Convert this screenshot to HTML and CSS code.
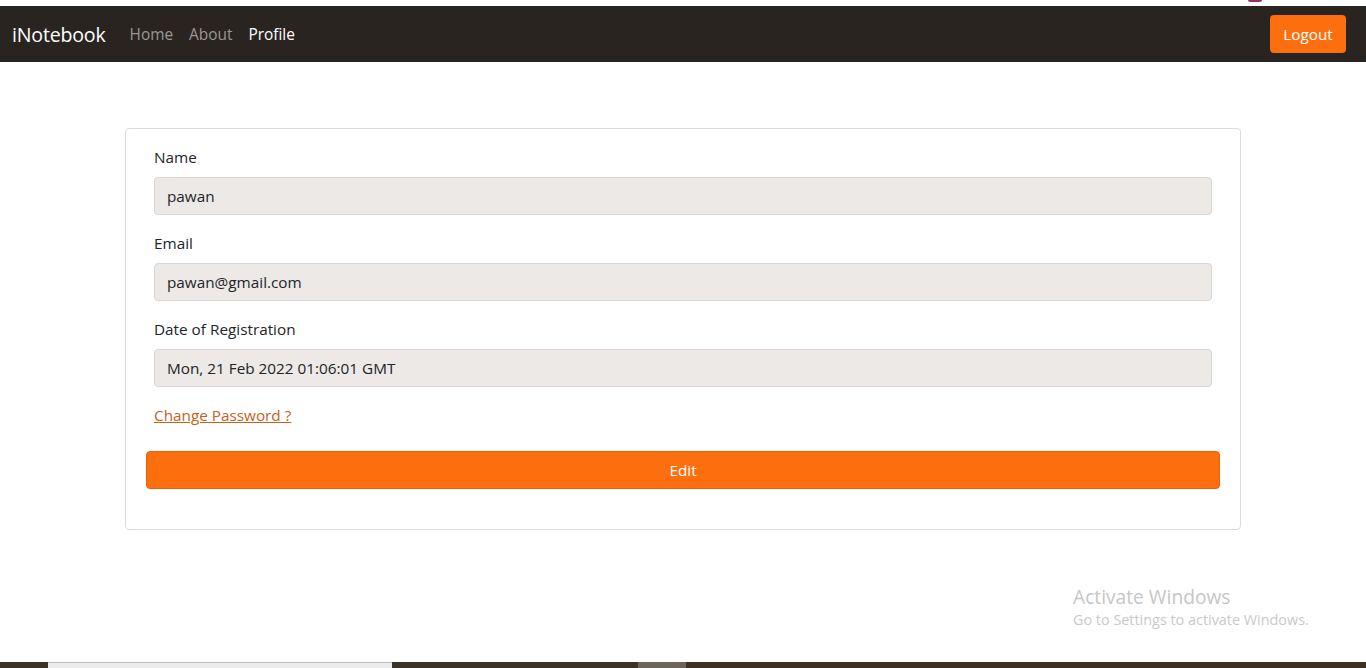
FILE: index.html
```html
<!DOCTYPE html>
<html lang="en">
<head>
<meta charset="utf-8">
<title>iNotebook</title>
<link rel="stylesheet" href="styles.css">
</head>
<body>
<div class="topstrip"><span class="pinkmark"></span></div>
<nav class="navbar">
  <div class="nav-left">
    <a class="brand" href="#">iNotebook</a>
    <a class="nav-link" href="#">Home</a>
    <a class="nav-link" href="#">About</a>
    <a class="nav-link active" href="#">Profile</a>
  </div>
  <button class="btn-logout">Logout</button>
</nav>
<main class="main">
  <div class="card">
    <div class="field">
      <label class="label">Name</label>
      <div class="input">pawan</div>
    </div>
    <div class="field">
      <label class="label">Email</label>
      <div class="input">pawan@gmail.com</div>
    </div>
    <div class="field">
      <label class="label">Date of Registration</label>
      <div class="input">Mon, 21 Feb 2022 01:06:01 GMT</div>
    </div>
    <a class="link" href="#">Change Password ?</a>
    <button class="btn-edit">Edit</button>
  </div>
</main>
<div class="watermark">
  <div class="wm-title">Activate Windows</div>
  <div class="wm-sub">Go to Settings to activate Windows.</div>
</div>
<div class="taskbar">
  <span class="tb tb-dark1"></span>
  <span class="tb tb-light"></span>
  <span class="tb tb-dark2"></span>
  <span class="tb tb-gray"></span>
  <span class="tb tb-dark3"></span>
</div>
</body>
</html>
```
FILE: styles.css
```css
* { box-sizing: border-box; }
html, body { margin: 0; padding: 0; }
body {
  font-family: "Open Sans", "Noto Sans", sans-serif;
  font-size: 15.3px;
  color: #212529;
  background: #fff;
  height: 668px;
  overflow: hidden;
  position: relative;
}
.topstrip {
  height: 6px;
  background: #fff;
  position: relative;
}
.pinkmark {
  position: absolute;
  left: 1248px;
  top: 0;
  width: 14px;
  height: 2px;
  background: #a0305a;
  border-radius: 0 0 6px 6px;
}
.navbar {
  height: 56px;
  background: #2a2421;
  display: flex;
  align-items: center;
  justify-content: space-between;
  padding: 0 20px 0 12px;
}
.nav-left { display: flex; align-items: center; }
.brand {
  color: #fff;
  text-decoration: none;
  font-size: 19.6px;
  margin-right: 16px;
  letter-spacing: -0.2px;
}
.nav-link {
  color: #9b9794;
  text-decoration: none;
  font-size: 15.4px;
  padding: 0 8px;
}
.nav-link.active { color: #fff; }
.btn-logout {
  font-family: inherit;
  background: #fd6e0e;
  color: #fff;
  border: none;
  border-radius: 4px;
  font-size: 15.3px;
  width: 76px;
  height: 38px;
  padding: 0;
}
.main {
  padding: 66px 125px 0 125px;
}
.card {
  border: 1px solid #dcdcdc;
  border-radius: 4px;
  height: 402px;
  padding: 17px 28px 0 28px;
}
.field { margin-bottom: 17px; }
.label {
  display: block;
  font-size: 15.3px;
  line-height: 22px;
  margin-bottom: 9px;
}
.input {
  height: 38px;
  background: #ece9e6;
  border: 1px solid #d8d5d2;
  border-radius: 4px;
  padding: 0 12px;
  display: flex;
  align-items: center;
  font-size: 15.3px;
}
.link {
  display: block;
  color: #c4621a;
  font-size: 15.3px;
  line-height: 22px;
  margin-top: 1px;
  width: max-content;
}
.btn-edit {
  display: block;
  font-family: inherit;
  margin: 25px -8px 0 -8px;
  width: calc(100% + 16px);
  height: 38px;
  background: #fd6e0e;
  color: #fff;
  border: 1px solid #e8600a;
  border-radius: 4px;
  font-size: 15.3px;
}
.watermark {
  position: absolute;
  left: 1073px;
  top: 585px;
  color: #c6c6c6;
}
.wm-title { font-size: 19.2px; line-height: 24px; }
.wm-sub { font-size: 14.4px; line-height: 22px; color: #c9c9c9; }
.taskbar {
  position: absolute;
  left: 0;
  bottom: 0;
  width: 100%;
  height: 6px;
  display: flex;
}
.tb { height: 6px; }
.tb-dark1 { width: 48px; background: #3b3328; }
.tb-light { width: 344px; background: #ececec; border-top: 1px solid #bdbdbd; }
.tb-dark2 { width: 246px; background: #3b3328; }
.tb-gray { width: 48px; background: #6c655e; }
.tb-dark3 { flex: 1; background: #3d3025; }
```
